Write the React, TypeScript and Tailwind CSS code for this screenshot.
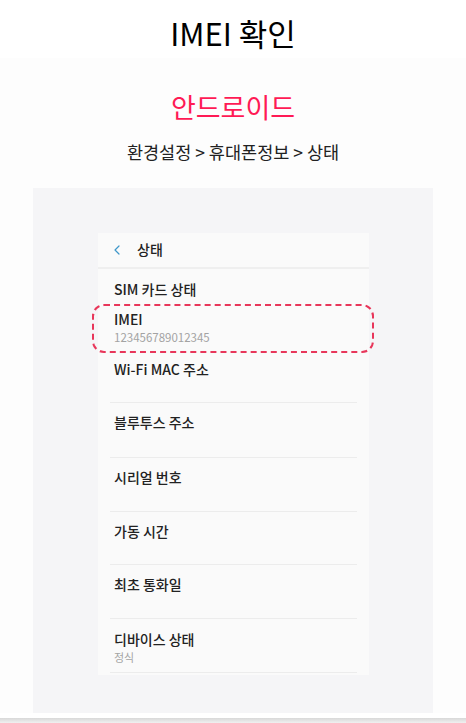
import { ChevronLeft } from 'lucide-react'

const rows = [
  { title: 'Wi-Fi MAC 주소', h: 'h-[53px]' },
  { title: '블루투스 주소', h: 'h-[55px]' },
  { title: '시리얼 번호', h: 'h-[54px]' },
  { title: '가동 시간', h: 'h-[53px]' },
  { title: '최초 통화일', h: 'h-[54px]' },
]

export default function App() {
  return (
    <div className="w-[466px] h-[723px] overflow-hidden bg-[#fdfdfd] flex flex-col" style={{ fontFamily: '"Noto Sans CJK KR", "Noto Sans", sans-serif' }}>
      {/* Page title */}
      <div className="h-[58px] bg-white flex items-center justify-center pt-[6px]">
        <h1 className="text-[31px] font-normal text-black leading-none">IMEI 확인</h1>
      </div>

      <div className="flex flex-col items-center pt-[35px]">
        <h2 className="text-[27px] text-[#ff1a55] leading-none">안드로이드</h2>
        <p className="mt-[23px] text-[17.5px] text-[#222] leading-none">환경설정 &gt; 휴대폰정보 &gt; 상태</p>
      </div>

      {/* Screenshot area */}
      <div className="mt-[27px] mx-[33px] w-[400px] h-[525px] bg-[#f5f5f7] pt-[45px] pl-[65px]">
        <div className="w-[271px] h-[442px] bg-[#fafafa] flex flex-col">
          <div className="h-[36px] flex items-center pl-[11px] gap-[12px] border-b-2 border-[#efefef]">
            <ChevronLeft className="w-[16px] h-[16px] text-[#3e97c9]" strokeWidth={1.8} />
            <span className="text-[14px] font-medium text-[#222]">상태</span>
          </div>

          <div className="h-[37px] flex items-center pl-[16px] pt-[4px]">
            <span className="text-[14px] font-medium text-[#222]">SIM 카드 상태</span>
          </div>

          <div className="relative h-[44px] pl-[16px] pt-[4px]">
            <div className="text-[14px] font-medium text-[#222] leading-[18px]">IMEI</div>
            <div className="text-[11.5px] text-[#a3a3a3] leading-[18px]">123456789012345</div>
            <div className="absolute left-[-6px] right-[-5px] top-[-2px] bottom-[-3px] border-2 border-dashed border-[#e8365a] rounded-[12px]" />
          </div>

          {rows.map((r) => (
            <div key={r.title} className={`${r.h} mx-[12px] pl-[4px] pt-[10px] border-b border-[#ececec]`}>
              <div className="text-[14px] font-medium text-[#222] leading-[18px]">{r.title}</div>
            </div>
          ))}

          <div className="h-[54px] mx-[12px] pl-[4px] pt-[11px] border-b border-[#ececec]">
            <div className="text-[14px] font-medium text-[#222] leading-[18px]">디바이스 상태</div>
            <div className="text-[11px] text-[#a3a3a3] leading-[18px]">정식</div>
          </div>
        </div>
      </div>

      <div className="h-[5px] bg-white" />
      <div className="h-[5px] bg-gradient-to-b from-[#d8d8d8] to-[#f0f0f0]" />
    </div>
  )
}
